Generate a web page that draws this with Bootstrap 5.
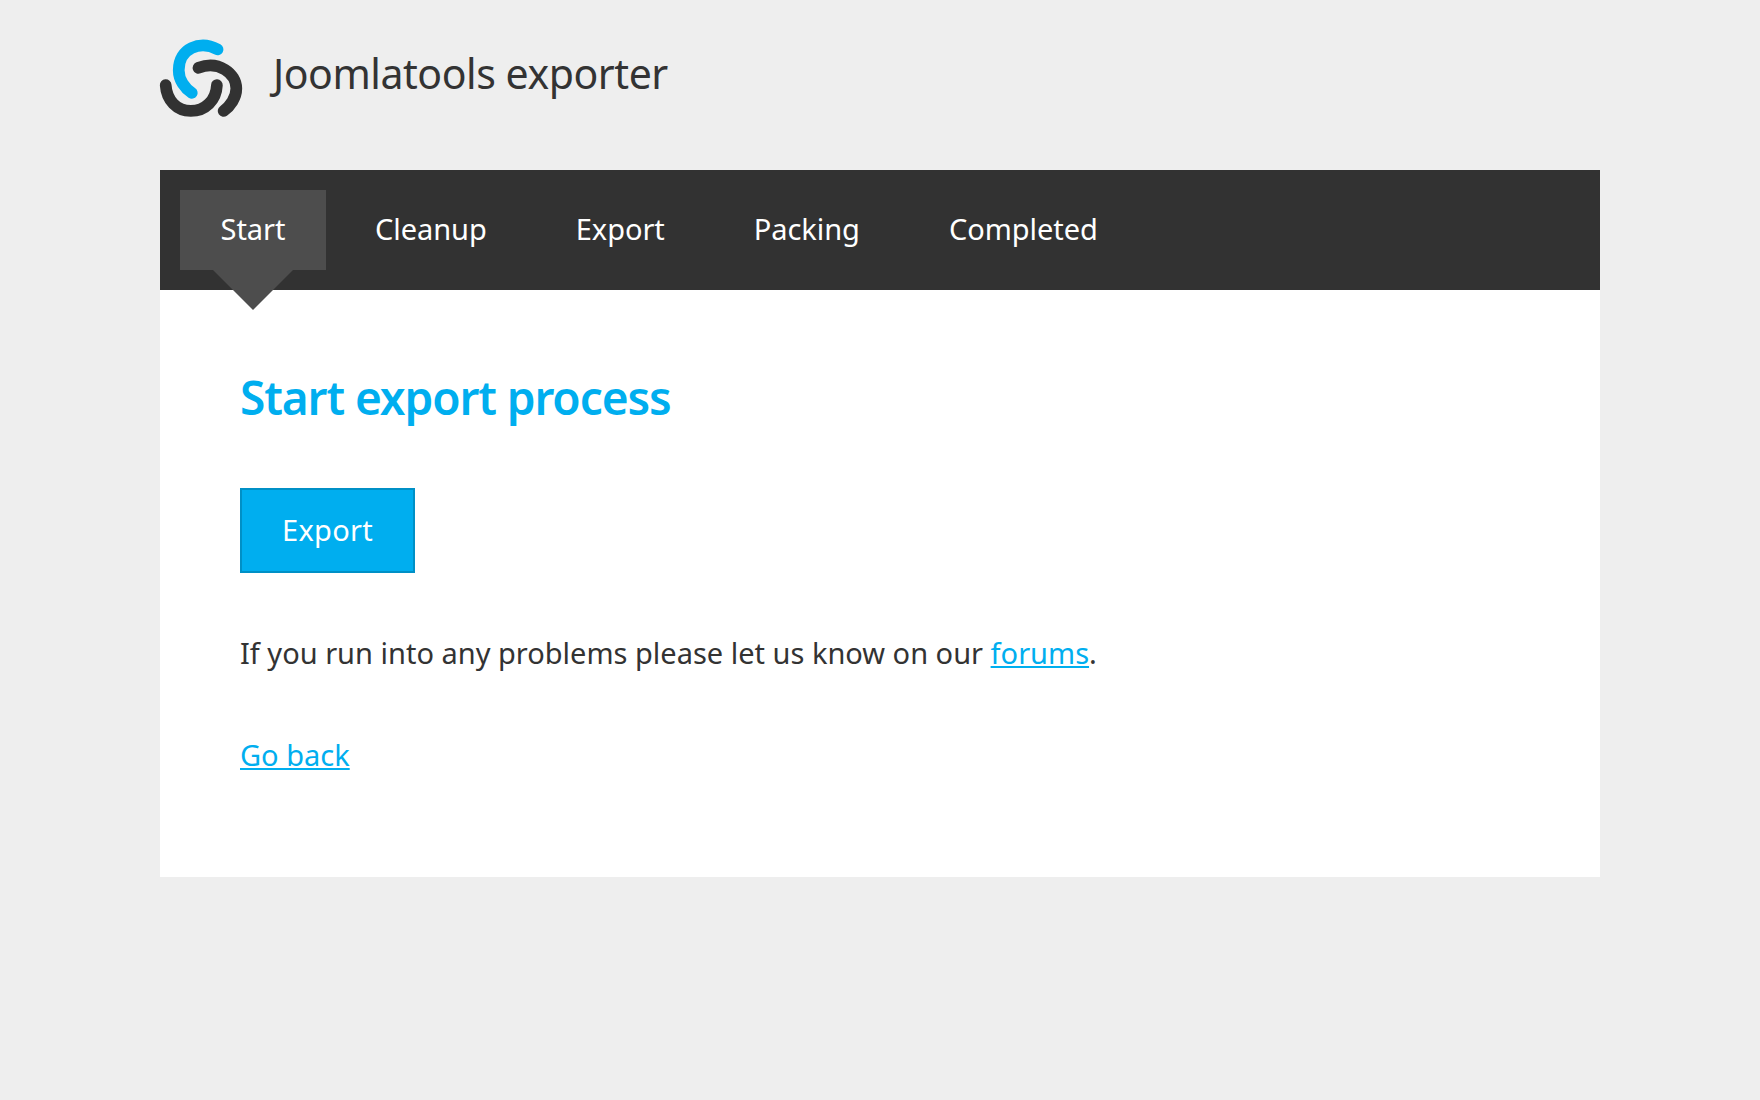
<!DOCTYPE html>
<html lang="en">
<head>
<meta charset="utf-8">
<title>Joomlatools exporter</title>
<link href="https://cdn.jsdelivr.net/npm/bootstrap@5.3.0/dist/css/bootstrap.min.css" rel="stylesheet">
<style>
body{background:#eee;color:#333;font-family:"Noto Sans","Open Sans",sans-serif;font-size:28px;line-height:1.4}
.shell{width:1440px;margin:0 auto}
.brand-row{height:170px;padding-top:39px;gap:30px}
.brand-row svg{width:82px;height:78px;flex:none;overflow:visible}
.brand-name{font-size:41px;line-height:1;height:78px;padding-top:14px;margin-left:1px;color:#333;letter-spacing:-.45px;font-weight:400}
.steps{background:#323232;height:120px;padding:20px;gap:9px}
.step{color:#fff;text-decoration:none;height:80px;padding:0 40px 4px;display:flex;align-items:center;justify-content:center;font-size:29px;letter-spacing:-.05px;line-height:1;position:relative}
.step:hover{color:#fff}
.step-on{background:#4d4d4d;width:146px;padding-left:0;padding-right:0;margin-right:-0px}
.step-on::after{content:"";position:absolute;left:50%;top:80px;margin-left:-40px;border-left:40px solid transparent;border-right:40px solid transparent;border-top:40px solid #4d4d4d}
.pane{background:#fff;height:587px;padding:80px}
.pane-title{color:#00aeef;font-size:46px;font-weight:600;line-height:1;letter-spacing:-1.1px;margin:4px 0 0}
.go-btn{background:#00aeef;border:2px solid #0090c6;color:#fff;width:175px;height:85px;border-radius:0;font-size:29px;letter-spacing:.25px;display:flex;align-items:center;justify-content:center;padding:0 0 2px;margin-top:68px}
.go-btn:hover{background:#00aeef;color:#fff;border-color:#0090c6}
.pane p{font-size:29px;letter-spacing:0;line-height:1;margin:0}
.note{margin-top:65px!important}
.back{margin-top:73px!important}
.pane a:not(.btn){color:#00aeef}
</style>
</head>
<body>
<div class="shell">
  <header class="brand-row d-flex align-items-start">
    <svg viewBox="60 57 245 233" fill="none" stroke-width="35" stroke-linecap="round" aria-label="Joomlatools logo">
      <path stroke="#00aeef" d="M232 88C180 60 116 85 116 150C116 180 135 205 155 218"/>
      <path stroke="#323232" d="M175 143C235 120 288 160 288 205C288 232 270 258 250 272"/>
      <path stroke="#323232" d="M77 195C80 240 110 272 152 272C195 272 228 240 230 195"/>
    </svg>
    <div class="brand-name">Joomlatools exporter</div>
  </header>
  <nav class="steps d-flex">
    <a class="step step-on" href="#">Start</a>
    <a class="step" href="#">Cleanup</a>
    <a class="step" href="#">Export</a>
    <a class="step" href="#">Packing</a>
    <a class="step" href="#">Completed</a>
  </nav>
  <main class="pane">
    <h1 class="pane-title">Start export process</h1>
    <a class="btn go-btn" href="#">Export</a>
    <p class="note">If you run into any problems please let us know on our <a href="#">forums</a>.</p>
    <p class="back"><a href="#">Go back</a></p>
  </main>
</div>
</body>
</html>
